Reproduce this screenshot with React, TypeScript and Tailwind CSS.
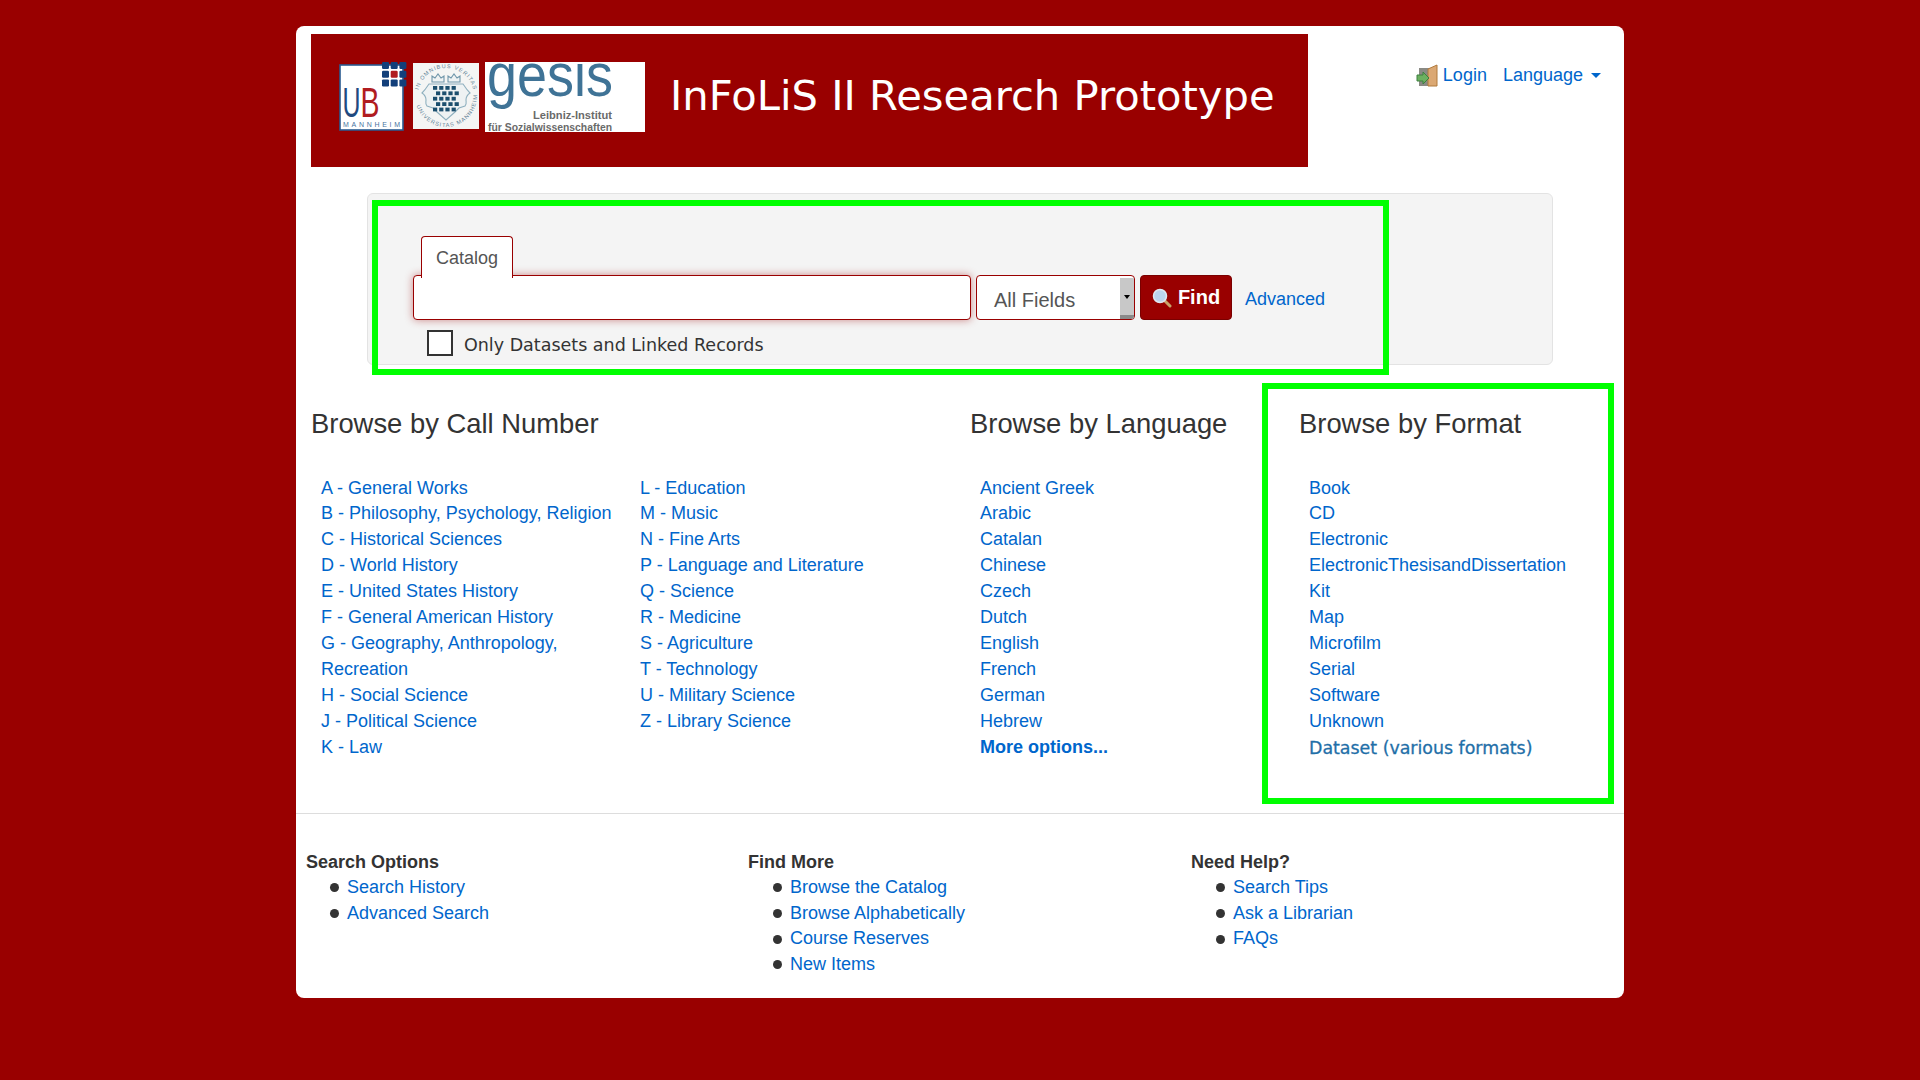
const linkCls = "text-[#0066cc]";

function LinkList({ items, className = "" }: { items: string[]; className?: string }) {
  return (
    <ul className={"pl-[10px] " + className}>
      {items.map((t) => (
        <li key={t} className="leading-[25.9px]">
          <a className={linkCls}>{t}</a>
        </li>
      ))}
    </ul>
  );
}

function Logos() {
  return (
    <div className="flex items-start gap-[6px] ml-[28px] mt-[28px] shrink-0">
      <svg width="68" height="69" viewBox="0 0 68 69">
        <rect x="1" y="3" width="63" height="65" fill="#fff" stroke="#2a5a90" strokeWidth="1.6" />
        <text x="3.5" y="55" fontFamily="Liberation Sans" fontSize="43" fill="#1f4a80" textLength="18" lengthAdjust="spacingAndGlyphs">U</text>
        <text x="21.5" y="55" fontFamily="Liberation Sans" fontSize="43" fill="#b01c20" textLength="19" lengthAdjust="spacingAndGlyphs">B</text>
        <text x="4" y="65" fontFamily="Liberation Sans" fontSize="7" fill="#4a74a0" textLength="57" lengthAdjust="spacing">MANNHEIM</text>
        {[0, 1, 2].map((r) => [0, 1, 2].map((c) => (
          <rect key={r + "-" + c} x={43 + c * 8.7} y={0 + r * 8.7} width="7" height="7" rx="1.2" fill={r === 1 && c === 1 ? "#b01c20" : "#123f7a"} />
        )))}
      </svg>
      <svg width="66" height="66" viewBox="0 0 66 66" className="mt-[1px] bg-[#f4f5f4]">
        <defs>
          <path id="sealTop" d="M5 33a28 28 0 0 1 56 0" />
          <path id="sealBottom" d="M2 33a31 31 0 0 0 62 0" />
        </defs>
        <text fontFamily="Liberation Sans" fontSize="5.6" fill="#5f8296" letterSpacing="1"><textPath href="#sealTop" startOffset="6">IN OMNIBUS VERITAS</textPath></text>
        <text fontFamily="Liberation Sans" fontSize="5.6" fill="#5f8296" letterSpacing="1"><textPath href="#sealBottom" startOffset="10">UNIVERSITAS MANNHEIM</textPath></text>
        <path d="M19 19v-6l3 2 3-4 3 4 3-2v6zM35 19v-6l3 2 3-4 3 4 3-2v6z" fill="#eef2f3" stroke="#6f96aa" strokeWidth="1.1" />
        <path d="M9 30c3-3 5-6 7-9h34c2 3 4 6 7 9-3 2-4 4-4 7 0 2 1 4-1 6l-6 2-4 4-9 8-9-8-4-4-6-2c-2-2-1-4-1-6 0-3-1-5-4-7z" fill="#eef2f3" stroke="#8fb0bf" strokeWidth="1.1" />
        {[0, 1, 2, 3, 4].map((r) => [0, 1, 2, 3].map((c) => (
          <rect key={r + "-" + c} x={20 + c * 6.2 + (r % 2) * 3} y={23 + r * 5.4} width="4.2" height="3.8" fill="#1c4f6e" />
        )))}
      </svg>
      <svg width="160" height="70" viewBox="0 0 160 70" className="bg-white">
        <text x="2" y="34" fontFamily="Liberation Sans" fontSize="62" fill="#3f7396" textLength="126" lengthAdjust="spacingAndGlyphs">gesis</text>
        <text x="48" y="57" fontFamily="Liberation Sans" fontSize="10.5" fontWeight="700" fill="#6a6a6a" textLength="79" lengthAdjust="spacingAndGlyphs">Leibniz-Institut</text>
        <text x="3" y="69" fontFamily="Liberation Sans" fontSize="11" fontWeight="700" fill="#6a6a6a" textLength="124" lengthAdjust="spacingAndGlyphs">für Sozialwissenschaften</text>
      </svg>
    </div>
  );
}

function LoginIcon() {
  return (
    <svg width="22" height="23" viewBox="0 0 22 23">
      <rect x="3" y="4" width="13" height="18" fill="#8a8a84" />
      <path d="M12 5l9-4v21h-9z" fill="#dba873" stroke="#b07a3c" strokeWidth="1" />
      <path d="M1 11h6V8l6 6-6 6v-3H1z" fill="#6cb060" stroke="#3f8040" strokeWidth="1" />
    </svg>
  );
}

function SearchIcon() {
  return (
    <svg width="20" height="20" viewBox="0 0 20 20">
      <path d="M12 12l6 6" stroke="#c9a36a" strokeWidth="3" strokeLinecap="round" />
      <circle cx="8" cy="8" r="6.5" fill="#bcd4ee" stroke="#dfe8f2" strokeWidth="1.5" />
    </svg>
  );
}

const callA = ["A - General Works", "B - Philosophy, Psychology, Religion", "C - Historical Sciences", "D - World History", "E - United States History", "F - General American History", "G - Geography, Anthropology, Recreation", "H - Social Science", "J - Political Science", "K - Law"];
const callB = ["L - Education", "M - Music", "N - Fine Arts", "P - Language and Literature", "Q - Science", "R - Medicine", "S - Agriculture", "T - Technology", "U - Military Science", "Z - Library Science"];
const langs = ["Ancient Greek", "Arabic", "Catalan", "Chinese", "Czech", "Dutch", "English", "French", "German", "Hebrew"];
const formats = ["Book", "CD", "Electronic", "ElectronicThesisandDissertation", "Kit", "Map", "Microfilm", "Serial", "Software", "Unknown"];

function Footer({ title, items, className, listClass }: { title: string; items: string[]; className: string; listClass: string }) {
  return (
    <div className={className}>
      <div className="font-bold leading-[26px] text-[#333]">{title}</div>
      <ul className={listClass}>
        {items.map((t) => (
          <li key={t} className="flex items-center gap-[8px] leading-[25.6px]">
            <span className="w-[9px] h-[9px] rounded-full bg-[#333]" />
            <a className={linkCls}>{t}</a>
          </li>
        ))}
      </ul>
    </div>
  );
}

const headingCls = "text-[27.4px] leading-[40px] mb-[32px] mt-[20.5px]";

export default function App() {
  return (
    <div className="min-h-[1080px] bg-[#990000] pt-[26px] font-['Liberation_Sans',sans-serif] text-[18px] text-[#333]">
      <div className="w-[1328px] h-[972px] bg-white rounded-[8px] ml-[296px] overflow-hidden">
        <div className="flex justify-between pt-[8px] pl-[15px]">
          <div className="flex w-[997px] h-[133px] bg-[#990000]">
            <Logos />
            <div className="ml-[25px] mt-[34px] font-['DejaVu_Sans',sans-serif] text-[41.7px] leading-[56px] text-white whitespace-nowrap">InFoLiS II Research Prototype</div>
          </div>
          <div className="flex items-start pt-[28px] pr-[23px] text-[18px]">
            <span className="flex items-center"><LoginIcon /><a className={linkCls + " ml-[5px] leading-[26px]"}>Login</a></span>
            <a className={linkCls + " ml-[16px] leading-[26px] flex items-center"}>Language<span className="ml-[8px] w-0 h-0 border-x-[5px] border-x-transparent border-t-[5px] border-t-[#0066cc]" /></a>
          </div>
        </div>

        <div className="mt-[26px] ml-[71px] w-[1186px] h-[172px] bg-[#f4f4f4] border border-[#e3e3e3] rounded-[6px] relative">
          <div className="absolute left-[4px] top-[6px] w-[1017px] h-[175px] border-[6px] border-[#00ff00]" />
          <div className="relative pl-[45px] pt-[42px]">
            <div className="relative z-10 ml-[8px] w-[92px] h-[42px] bg-white border border-[#990000] border-b-0 rounded-t-[4px] text-center leading-[42px] text-[#555]">Catalog</div>
            <div className="flex items-start h-[45px] -mt-[3px]">
              <div className="w-[558px] h-[45px] bg-white border border-[#990000] rounded-[4px] shadow-[0_0_8px_rgba(153,0,0,0.45)]" />
              <div className="relative ml-[5px] w-[159px] h-[45px] bg-white border border-[#990000] rounded-[4px] text-[20px] leading-[49px] pl-[17px] text-[#555] overflow-hidden">
                All Fields
                <div className="absolute right-0 top-[2px] w-[14px] h-[41px] bg-[#c8c8c8] border-b-[4px] border-b-[#8a8a8a] flex items-center justify-center">
                  <span className="w-0 h-0 border-x-[3px] border-x-transparent border-t-[4px] border-t-[#000]" />
                </div>
              </div>
              <button className="ml-[5px] w-[92px] h-[45px] bg-[#990000] border border-[#7a0000] rounded-[4px] text-white font-bold text-[20px] flex items-center justify-center gap-[6px]"><SearchIcon /><span className="-mt-[1px]">Find</span></button>
              <a className={linkCls + " ml-[13px] leading-[49px]"}>Advanced</a>
            </div>
            <div className="flex items-center mt-[7px] ml-[14px]">
              <span className="w-[26px] h-[26px] border-[2px] border-[#333] bg-white" />
              <span className="ml-[11px] mt-[5px] font-['DejaVu_Sans',sans-serif] text-[17.5px] text-[#333]">Only Datasets and Linked Records</span>
            </div>
          </div>
        </div>

        <div className="flex mt-[18px] pl-[15px] relative">
          <div className="w-[659px]">
            <h3 className={headingCls}>Browse by Call Number</h3>
            <div className="flex">
              <LinkList items={callA} className="w-[319px] pr-[10px]" />
              <LinkList items={callB} className="flex-1" />
            </div>
          </div>
          <div className="w-[329px]">
            <h3 className={headingCls}>Browse by Language</h3>
            <LinkList items={langs} />
            <a className={linkCls + " pl-[10px] font-bold leading-[25.9px] block"}>More options...</a>
          </div>
          <div className="flex-1">
            <h3 className={headingCls}>Browse by Format</h3>
            <LinkList items={formats} />
            <a className="pl-[10px] font-['DejaVu_Sans',sans-serif] text-[17.4px] [-webkit-text-stroke:0.3px_#1f6fa8] leading-[26px] block text-[#1f6fa8]">Dataset (various formats)</a>
          </div>
          <div className="absolute left-[966px] top-[0px] w-[352px] h-[421px] border-[6px] border-[#00ff00]" />
        </div>

        <div className="mt-[52.5px] border-t border-[#dddddd] pt-[35px] pl-[10px] flex">
          <Footer title="Search Options" items={["Search History", "Advanced Search"]} className="w-[442px]" listClass="pl-[24px]" />
          <Footer title="Find More" items={["Browse the Catalog", "Browse Alphabetically", "Course Reserves", "New Items"]} className="w-[443px]" listClass="pl-[25px]" />
          <Footer title="Need Help?" items={["Search Tips", "Ask a Librarian", "FAQs"]} className="flex-1" listClass="pl-[25px]" />
        </div>
      </div>
    </div>
  );
}
